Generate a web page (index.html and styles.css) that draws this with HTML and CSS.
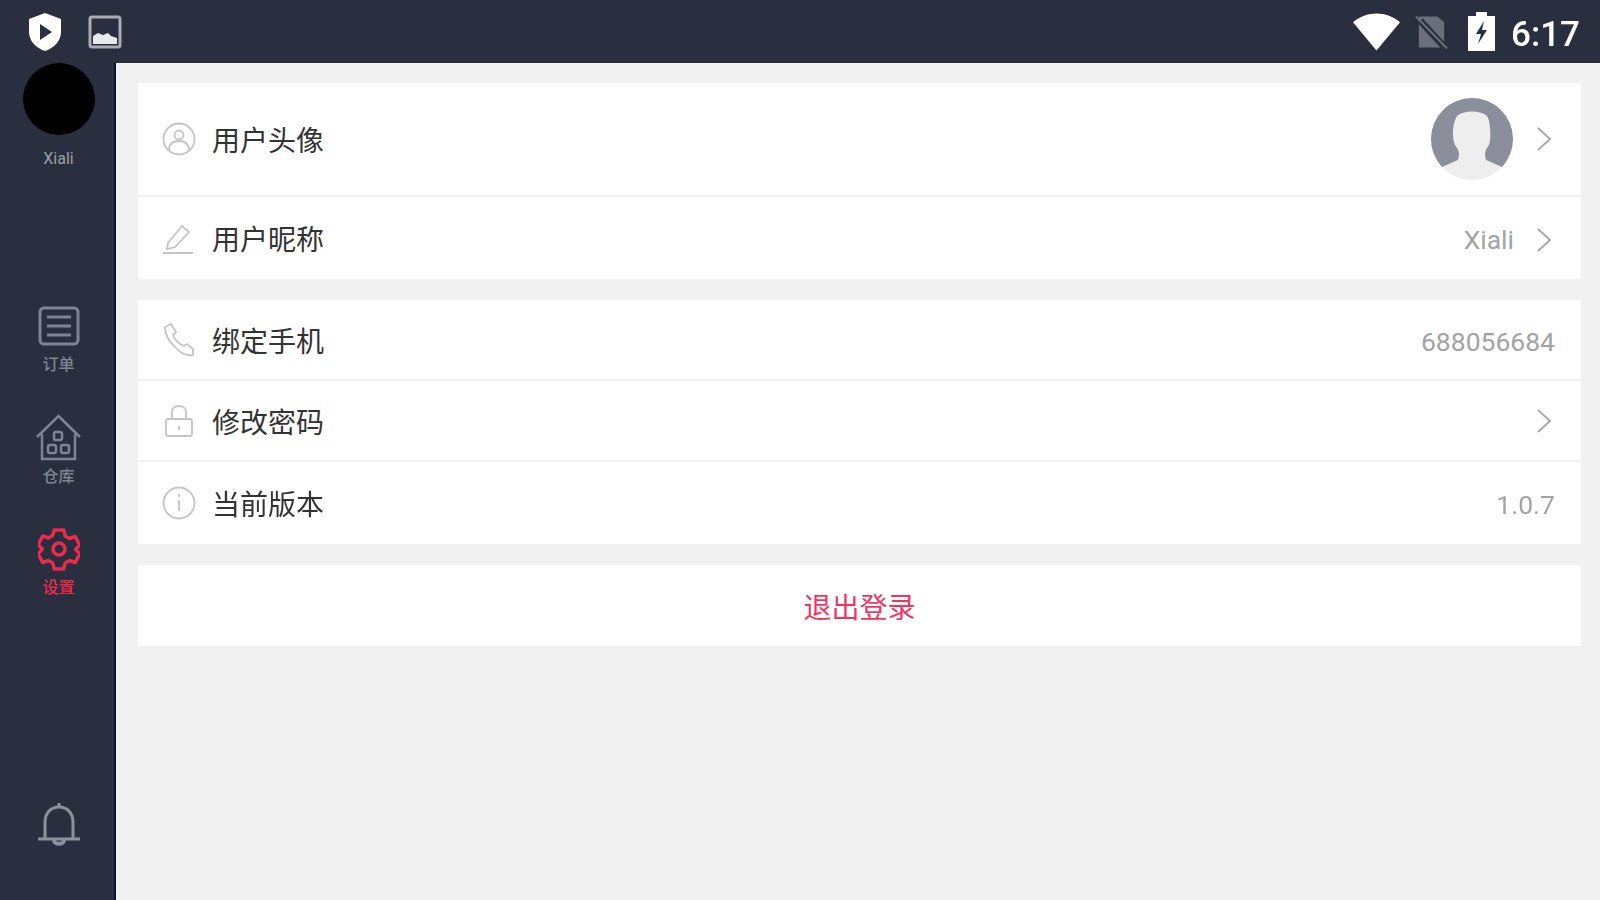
FILE: index.html
```html
<!DOCTYPE html>
<html lang="zh-CN">
<head>
    <meta charset="UTF-8">
    <title>设置</title>
    <link rel="stylesheet" href="styles.css">
</head>
<body>
    <div class="statusbar">
        <div class="status-left">
            <svg class="shield-icon" viewBox="0 0 36 40"><path d="M18 1l16 6v13c0 9-7 16-16 19C9 36 2 29 2 20V7z" fill="#fff"/><path d="M13 12l12 8-12 8z" fill="#292f3f"/></svg>
            <svg class="image-icon" viewBox="0 0 34 34"><rect x="2" y="2" width="30" height="30" rx="2" fill="none" stroke="#a9acb5" stroke-width="3"/><path d="M5 21l5-3 5 2 5-2 3 3 6 2v6H5z" fill="#e8e9ec"/></svg>
        </div>
        <div class="status-right">
            <svg class="wifi-icon" viewBox="0 0 48 38"><path d="M24 38L0 9C7 3 15 0 24 0s17 3 24 9z" fill="#fff"/></svg>
            <svg class="sim-icon" viewBox="0 0 34 34"><path d="M4 1h19l7 6v20L8 3 4 7zM4 9l22 24H4z" fill="#6b6f7c"/><path d="M1 1l32 33" stroke="#6b6f7c" stroke-width="2"/></svg>
            <svg class="battery-icon" viewBox="0 0 27 39"><path d="M8 0h11v4h8v35H0V4h8z" fill="#fff"/><path d="M16 9l-8 13h5l-3 10 9-14h-5z" fill="#292f3f"/></svg>
            <span class="clock">6:17</span>
        </div>
    </div>

    <div class="layout">
        <div class="sidebar">
            <div class="profile">
                <div class="avatar"></div>
                <div class="profile-name">Xiali</div>
            </div>
            <div class="nav">
                <div class="nav-item nav-order">
                    <svg class="nav-icon" viewBox="0 0 42 40" fill="none" stroke="currentColor" stroke-width="3"><rect x="2" y="2" width="38" height="36" rx="4"/><path d="M9 11h24M9 20h24M9 29h24"/></svg>
                    订单
                </div>
                <div class="nav-item nav-store">
                    <svg class="nav-icon store-icon" viewBox="0 0 47 47" fill="none" stroke="currentColor" stroke-width="2.5"><path d="M2 23L23.5 2 45 23M7 20v25h33V20"/><rect x="19" y="18" width="8" height="8" rx="2"/><rect x="13" y="31" width="8" height="8" rx="2"/><rect x="26" y="31" width="8" height="8" rx="2"/></svg>
                    仓库
                </div>
                <div class="nav-item nav-settings active">
                    <svg class="nav-icon gear-icon" viewBox="0 0 42 44" fill="none" stroke="currentColor" stroke-width="3.5" stroke-linejoin="round"><path d="M16 3h10l1.500 6 4.500 2.500 6-2 5 8.500-4.500 4.500 4.500 4.500-5 8.500-6-2-4.500 2.500-1.500 6H16l-1.500-6-4.500-2.500-6 2-5-8.500L3.500 22-1 17.500 4 9l6 2 4.500-2.500z" transform="translate(1 0) scale(.95 1)"/><circle cx="21" cy="22" r="6"/></svg>
                    设置
                </div>
            </div>
            <svg class="bell-icon" viewBox="0 0 42 46" fill="none" stroke="currentColor" stroke-width="3"><path d="M7 36V19C7 10 13 4 21 4s14 6 14 15v17M0 36h42"/><path d="M16 37c0 5 10 5 10 0" stroke-width="4"/><path d="M21 0v4"/></svg>
        </div>

        <div class="main">
            <div class="card">
                <div class="row row-avatar">
                    <svg class="row-icon" viewBox="0 0 34 34" fill="none" stroke="#c4c4c4" stroke-width="1.800"><circle cx="17" cy="17" r="15.500"/><circle cx="17" cy="13" r="4.500"/><path d="M7 28c0-6 4-9 10-9s10 3 10 9"/></svg>
                    <span class="row-label">用户头像</span>
                    <svg class="user-photo" viewBox="0 0 82 82"><circle cx="41" cy="41" r="41" fill="#eeeeee"/><path d="M11 69A41 41 0 1 1 71 69L55 62C53 56 54 52 58 47 60 42 60 24 56 18 50 12 32 12 26 18 21 26 21 40 24 47 28 52 29 56 27 62z" fill="#8a8f9b"/></svg>
                    <svg class="chevron" viewBox="0 0 16 26"><path d="M2 2l12 11L2 24" fill="none" stroke="#aaa" stroke-width="2"/></svg>
                </div>
                <div class="row row-short">
                    <svg class="row-icon" viewBox="0 0 34 34" fill="none" stroke="#c4c4c4" stroke-width="1.800"><path d="M6 22L20 5l7 6-14 15-8 2zM1 32h30"/></svg>
                    <span class="row-label">用户昵称</span>
                    <span class="row-value">Xiali</span>
                    <svg class="chevron" viewBox="0 0 16 26"><path d="M2 2l12 11L2 24" fill="none" stroke="#aaa" stroke-width="2"/></svg>
                </div>
            </div>

            <div class="card">
                <div class="row">
                    <svg class="row-icon" viewBox="0 0 34 34" fill="none" stroke="#c4c4c4" stroke-width="1.800"><path d="M3 4l6-3 5 8-3 3c2 5 6 9 11 11l3-2 6 5v6c-6 1-13-2-18-8C7 19 3 11 3 4z"/></svg>
                    <span class="row-label">绑定手机</span>
                    <span class="row-value">688056684</span>
                </div>
                <div class="row">
                    <svg class="row-icon" viewBox="0 0 34 34" fill="none" stroke="#c4c4c4" stroke-width="1.800"><rect x="4" y="15" width="26" height="17" rx="2"/><path d="M10 15V8c0-8 14-8 14 0v7M17 22v4"/></svg>
                    <span class="row-label">修改密码</span>
                    <svg class="chevron" viewBox="0 0 16 26"><path d="M2 2l12 11L2 24" fill="none" stroke="#aaa" stroke-width="2"/></svg>
                </div>
                <div class="row row-last">
                    <svg class="row-icon" viewBox="0 0 34 34" fill="none" stroke="#c4c4c4" stroke-width="1.800"><circle cx="17" cy="17" r="15.500"/><path d="M17 14v11M17 8v3"/></svg>
                    <span class="row-label">当前版本</span>
                    <span class="row-value">1.0.7</span>
                </div>
            </div>

            <div class="card logout">退出登录</div>
        </div>
    </div>
</body>
</html>
```

FILE: styles.css
```css
body {
    margin: 0;
    width: 1600px;
    height: 900px;
    overflow: hidden;
    font-family: 'Roboto', 'Noto Sans CJK SC', sans-serif;
    background-color: #f1f1f1;
}
/* the source shot is a soft upscale */
.statusbar, .layout {
    filter: blur(0.6px);
}
.statusbar {
    height: 63px;
    background-color: #292f3f;
    display: flex;
    justify-content: space-between;
    align-items: center;
}
.status-left {
    display: flex;
    align-items: center;
    gap: 25px;
    padding-left: 27px;
}
.shield-icon {
    width: 36px;
    height: 40px;
}
.image-icon {
    width: 34px;
    height: 34px;
}
.status-right {
    display: flex;
    align-items: center;
    padding-right: 20px;
}
.wifi-icon {
    width: 47px;
    height: 38px;
    margin-right: 15px;
}
.sim-icon {
    width: 33px;
    height: 34px;
    margin-right: 20px;
}
.battery-icon {
    width: 27px;
    height: 39px;
    margin-right: 16px;
}
.clock {
    color: #fff;
    font-size: 35px;
    font-weight: 500;
    line-height: 40px;
    padding-top: 6px;
}
.layout {
    display: flex;
    height: 837px;
}
.sidebar {
    width: 111px;
    padding-left: 3px;
    background-color: #292f3f;
    border-right: 2px solid #0d1330;
    display: flex;
    flex-direction: column;
    align-items: center;
    color: #7f8491;
}
.profile {
    display: flex;
    flex-direction: column;
    align-items: center;
}
.avatar {
    width: 72px;
    height: 72px;
    border-radius: 50%;
    background-color: #000;
}
.profile-name {
    font-size: 16px;
    line-height: 20px;
    margin-top: 14px;
    color: #9a9ea8;
}
.nav {
    margin-top: 137px;
    display: flex;
    flex-direction: column;
}
.nav-item {
    display: flex;
    flex-direction: column;
    align-items: center;
    font-size: 16px;
    font-weight: 500;
    line-height: 20px;
    color: #7f8491;
}
.nav-icon {
    width: 42px;
    height: 40px;
    margin-bottom: 9px;
}
.nav-store {
    margin-top: 39px;
}
.store-icon {
    width: 47px;
    height: 47px;
    margin-bottom: 6px;
}
.nav-settings {
    margin-top: 40px;
}
.gear-icon {
    height: 44px;
    margin-bottom: 7px;
}
.active {
    color: #ee2a4d;
}
.bell-icon {
    width: 42px;
    height: 46px;
    margin-top: auto;
    margin-bottom: 51px;
    color: #8d919c;
}
.main {
    flex: 1;
    padding: 20px 19px 0 22px;
    display: flex;
    flex-direction: column;
    gap: 21px;
}
.card {
    background-color: #fff;
}
.row {
    display: flex;
    align-items: center;
    height: 79px;
    padding: 0 26px 0 24px;
    border-bottom: 2px solid #f1f1f1;
    font-size: 28px;
}
.row-avatar {
    height: 112px;
}
.row-short {
    height: 82px;
    border-bottom: none;
}
.row-last {
    height: 82px;
    border-bottom: none;
}
.row-icon {
    width: 34px;
    height: 34px;
    margin-right: 16px;
}
.row-label {
    color: #333;
    flex: 1;
}
.row-value {
    color: #a3a3a3;
    font-size: 26.5px;
    padding-top: 3px;
}
.chevron {
    width: 16px;
    height: 26px;
    margin-left: 22px;
    margin-right: 3px;
}
.row-short .chevron {
    margin-top: 3px;
}
.user-photo {
    width: 82px;
    height: 82px;
    margin-right: 2px;
}
.user-photo + .chevron {
    margin-left: 21px;
}
.logout {
    height: 81px;
    display: flex;
    align-items: center;
    justify-content: center;
    font-size: 28px;
    color: #f5305a;
}
```
